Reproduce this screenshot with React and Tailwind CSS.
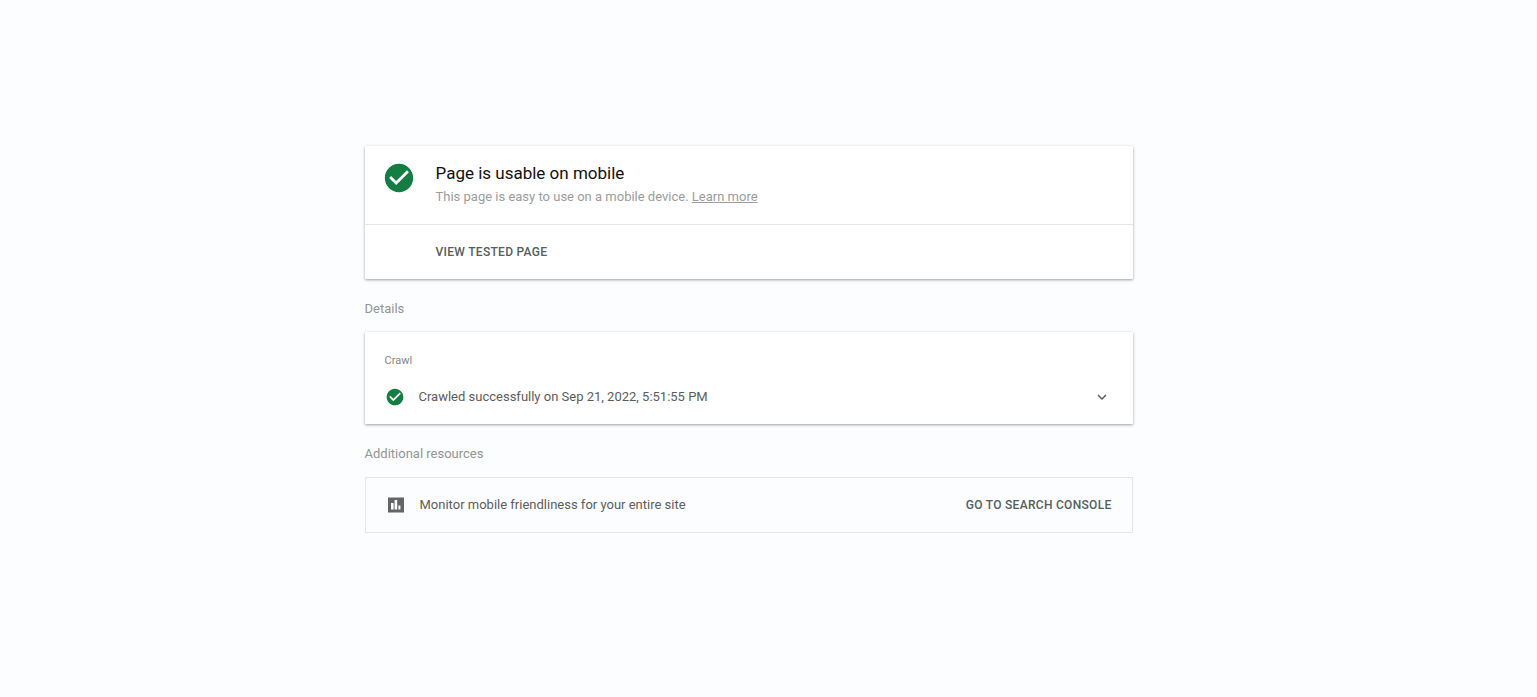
import React from "react";
import { MdCheckCircle, MdExpandMore } from "react-icons/md";

const card = "rounded-[1px] bg-white shadow-[0_1px_3px_rgba(0,0,0,0.38)]";
const action = "text-[12px] leading-5 font-medium tracking-wide text-[#53605d]";

function SectionTitle({ children }) {
  return <h2 className="pt-5 pb-[13px] text-[13px] leading-5 text-[#929594]">{children}</h2>;
}

function ChartIcon() {
  return (
    <svg viewBox="0 0 20 20" aria-hidden="true" className="mr-3.5 size-5 shrink-0">
      <rect x="2" y="2.5" width="16" height="15" fill="#646567" />
      <path d="M5 8h2.6v6.5H5zM8.6 5h2.6v9.5H8.6zM12.4 10.5h2v4h-2z" fill="#fff" />
    </svg>
  );
}

export default function App() {
  return (
    <div className="min-h-screen bg-[#fcfdfe] px-4 pt-[146px] pb-16 font-['Roboto',sans-serif]">
      <main className="mx-auto w-full max-w-[808px] pr-10">
        <section className={card}>
          <div className="flex gap-5 border-b border-[#e4e6e6] px-[17px] pt-[15px] pb-[17px]">
            <MdCheckCircle className="size-[34px] shrink-0 text-[#137d42]" />
            <div>
              <h1 className="text-[17px] leading-6 text-[#101010]">Page is usable on mobile</h1>
              <p className="mt-0.5 text-[13px] leading-5 text-[#9c9c9c]">
                This page is easy to use on a mobile device.{" "}
                <a href="#learn" className="underline">Learn more</a>
              </p>
            </div>
          </div>
          <div className="flex py-[17px] pl-[71px]">
            <button type="button" className={action}>VIEW TESTED PAGE</button>
          </div>
        </section>
        <SectionTitle>Details</SectionTitle>
        <section className={`${card} px-5 pt-[21px] pb-[15px]`}>
          <h3 className="text-[11px] leading-4 text-[#858585]">Crawl</h3>
          <button type="button" className="mt-4 flex w-full items-center text-left text-[13px] leading-6 text-[#5c5c5c]">
            <MdCheckCircle className="mr-3.5 size-5 shrink-0 text-[#137d42]" />
            <span className="grow">Crawled successfully on Sep 21, 2022, 5:51:55 PM</span>
            <MdExpandMore className="mr-0.5 size-[18px] shrink-0" />
          </button>
        </section>
        <SectionTitle>Additional resources</SectionTitle>
        <section className="flex items-center border border-[#e4e6e7] px-5 py-[15px]">
          <ChartIcon />
          <p className="grow text-[13px] leading-6 text-[#5c5c5c]">Monitor mobile friendliness for your entire site</p>
          <a href="#console" className={action}>GO TO SEARCH CONSOLE</a>
        </section>
      </main>
    </div>
  );
}
